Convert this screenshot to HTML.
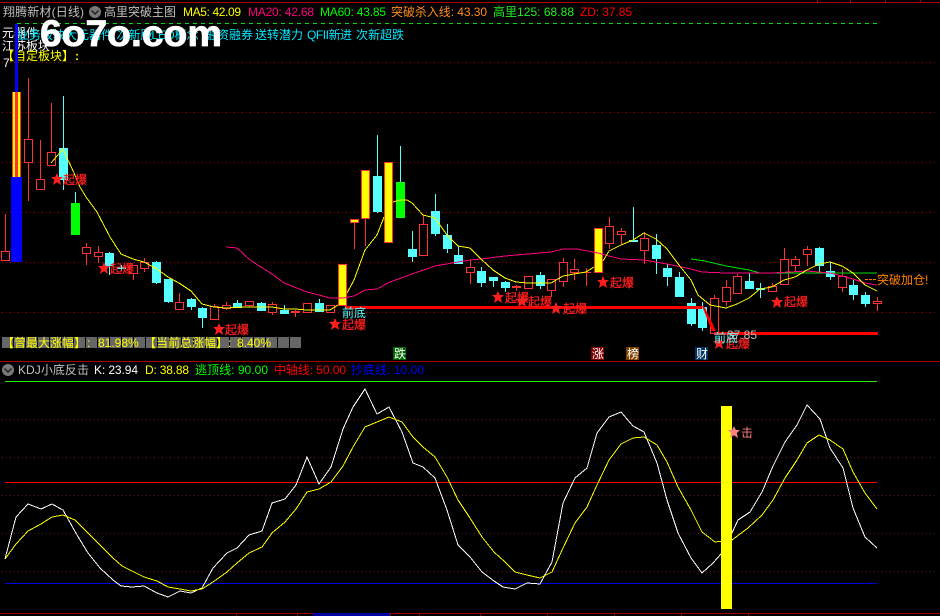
<!DOCTYPE html>
<html><head><meta charset="utf-8"><title>KDJ</title>
<style>
html,body{margin:0;padding:0;background:#000;width:940px;height:616px;overflow:hidden}
svg{display:block;position:absolute;left:0;top:0}
text{font-family:"Liberation Sans","WenQuanYi Zen Hei","Noto Sans CJK SC",sans-serif;font-size:12px}
.c{shape-rendering:crispEdges}
.r{fill:#000;stroke:#ff3232;stroke-width:1}
.b{fill:#55ffff}
.y{fill:#ffff00;stroke:#ff3232;stroke-width:1}
.l{fill:none;shape-rendering:crispEdges;stroke-width:1}
.q{fill:#ff1e1e;stroke:#ff1e1e;stroke-width:.25}
</style></head><body>
<svg width="940" height="616" viewBox="0 0 940 616" xmlns="http://www.w3.org/2000/svg">
<defs><polygon id="s" points="0,-6 1.8,-2 6,-2 2.8,1 4,6 0,3.2 -4,6 -2.8,1 -6,-2 -1.8,-2"/></defs>
<rect width="940" height="616" fill="#000"/>
<g class="c">
<path d="M0 2.5H940M817.5 0V2M850.5 0V2M885.5 0V2M920.5 0V2" stroke="#b00000" fill="none"/>
<path d="M0 361.5H940" stroke="#a00000"/>
<path d="M0 613.5H940M236.5 613V616M297.5 613V616M313.5 613V616M390.5 613V616M419.5 613V616M480.5 613V616M547.5 613V616M614.5 613V616M681.5 613V616M748.5 613V616" stroke="#a00000" fill="none"/>
<rect x="313" y="613" width="77" height="3" fill="#0000a0"/>
<path d="M2 62.5H938M2 112.5H938M2 162.5H938M2 212.5H938M2 262.5H938M2 312.5H938" stroke="#a00000" stroke-dasharray="1 3" fill="none"/>
<path d="M2 419.5H938M2 457.5H938M2 495.5H938M2 533.5H938M2 571.5H938" stroke="#601414" stroke-dasharray="1 3" fill="none"/>
<path d="M17 23.5H877" stroke="#00e000" stroke-dasharray="4 4" fill="none"/>
<path d="M5 381.5H877" stroke="#22ee00"/>
<path d="M5 482.5H877" stroke="#ff0000"/>
<path d="M5 583.5H877" stroke="#0000e0"/>
</g>

<!-- gray info bar -->
<g class="c" fill="#666">
<rect x="2" y="337" width="11" height="11"/><rect x="14" y="337" width="11" height="11"/><rect x="26" y="337" width="11" height="11"/><rect x="38" y="337" width="11" height="11"/><rect x="50" y="337" width="11" height="11"/><rect x="62" y="337" width="11" height="11"/><rect x="74" y="337" width="11" height="11"/><rect x="86" y="337" width="11" height="11"/><rect x="98" y="337" width="11" height="11"/><rect x="110" y="337" width="11" height="11"/><rect x="122" y="337" width="11" height="11"/><rect x="134" y="337" width="11" height="11"/><rect x="146" y="337" width="11" height="11"/><rect x="158" y="337" width="11" height="11"/><rect x="170" y="337" width="11" height="11"/><rect x="182" y="337" width="11" height="11"/><rect x="194" y="337" width="11" height="11"/><rect x="206" y="337" width="11" height="11"/><rect x="218" y="337" width="11" height="11"/><rect x="230" y="337" width="11" height="11"/><rect x="242" y="337" width="11" height="11"/><rect x="254" y="337" width="11" height="11"/><rect x="266" y="337" width="11" height="11"/><rect x="278" y="337" width="11" height="11"/><rect x="290" y="337" width="11" height="11"/>
</g>
<g fill="#ffff00">
<text x="2" y="347" textLength="84">【曾最大涨幅】</text><text x="87" y="347">:</text><text x="98" y="347">81.98%</text>
<text x="144" y="347" textLength="84">【当前总涨幅】</text><text x="228" y="347">:</text><text x="237" y="347">8.40%</text>
</g>

<!-- badges -->
<g class="c"><rect x="393" y="347" width="13" height="13" fill="#006400"/><rect x="591" y="347" width="13" height="13" fill="#800000"/><rect x="626" y="347" width="13" height="13" fill="#804000"/><rect x="695" y="347" width="13" height="13" fill="#003060"/></g>
<g fill="#fff"><text x="394" y="358">跌</text><text x="592" y="358">涨</text><text x="627" y="358">榜</text><text x="696" y="358">财</text></g>

<!-- wicks -->
<g class="c" fill="none">
<path stroke="#ff3232" d="M5.5 214V251M28.5 78V201M40.5 140V179M51.5 103V152M86.5 243V265M98.5 246V263M133.5 265V280M144.5 258V272M179.5 293V302M214.5 304V320M226.5 302V310M249.5 301V307M272.5 302V315M295.5 310V317M354.5 223V249M365.5 218V246M423.5 215V224M470.5 260V284M516.5 285V291M551.5 290V297M563.5 258V287M574.5 259V280M586.5 268V286M609.5 217V249M621.5 228V244M644.5 232V264M714.5 295V333M726.5 280V306M737.5 274V293M772.5 283V291M784.5 248V284M795.5 256V272M807.5 246V266M842.5 269V292M877.5 297V311"/>
<path stroke="#55ffff" d="M63.5 96V190M75.5 192V203M109.5 252V275M121.5 265V271M156.5 261V284M168.5 279V303M191.5 298V310M202.5 307V328M237.5 300V308M261.5 302V311M284.5 305V314M319.5 299V312M377.5 135V213M400.5 146V182M412.5 231V262M435.5 194V236M447.5 224V253M458.5 246V264M481.5 267V287M493.5 277V287M505.5 281V292M540.5 272V289M633.5 207V242M656.5 234V274M667.5 264V286M679.5 272V297M691.5 298V326M702.5 302V331M749.5 273V289M760.5 283V298M819.5 247V273M830.5 262V280M853.5 280V300M865.5 292V307"/>
</g>
<!-- bodies -->
<g class="c">
<rect class="r" x="1.5" y="251.5" width="8" height="9"/>
<rect x="15" y="24" width="3" height="68" fill="#0000ff"/>
<rect x="11" y="177" width="11" height="85" fill="#0000ff"/>
<rect x="12" y="92" width="9" height="85" fill="#ff3232"/><rect x="13" y="92" width="2" height="85" fill="#ffff00"/><rect x="18" y="92" width="2" height="85" fill="#ffff00"/>
<rect class="r" x="24.5" y="139.5" width="8" height="23"/>
<rect class="r" x="36.5" y="179.5" width="8" height="10"/>
<rect class="r" x="47.5" y="152.5" width="8" height="13"/>
<rect class="b" x="59" y="148" width="9" height="32"/>
<rect x="71" y="203" width="9" height="32" fill="#00ff00"/>
<rect class="r" x="82.5" y="247.5" width="8" height="6"/>
<rect class="r" x="94.5" y="252.5" width="8" height="4"/>
<rect class="b" x="105" y="253" width="9" height="13"/>
<rect class="b" x="117" y="267" width="9" height="2"/>
<rect class="r" x="129.5" y="265.5" width="8" height="8"/>
<rect class="r" x="140.5" y="262.5" width="8" height="6"/>
<rect class="b" x="152" y="262" width="9" height="21"/>
<rect class="b" x="164" y="279" width="9" height="23"/>
<rect class="r" x="175.5" y="302.5" width="8" height="7"/>
<rect class="b" x="187" y="299" width="9" height="8"/>
<rect class="b" x="198" y="308" width="9" height="10"/>
<rect class="r" x="210.5" y="306.5" width="8" height="13"/>
<rect class="r" x="222.5" y="305.5" width="8" height="3"/>
<rect class="b" x="233" y="303" width="9" height="5"/>
<rect class="r" x="245.5" y="301.5" width="8" height="4"/>
<rect class="b" x="257" y="303" width="9" height="8"/>
<rect class="r" x="268.5" y="304.5" width="8" height="8"/>
<rect class="b" x="280" y="310" width="9" height="4"/>
<rect x="291" y="311" width="9" height="2" fill="#ff3232"/>
<rect class="r" x="303.5" y="303.5" width="8" height="9"/>
<rect class="b" x="315" y="303" width="9" height="9"/>
<rect class="r" x="326.5" y="305.5" width="8" height="7"/>
<rect class="y" x="338.5" y="264.5" width="8" height="41"/>
<rect class="y" x="350.5" y="219.5" width="8" height="3"/>
<rect class="y" x="361.5" y="170.5" width="8" height="48"/>
<rect class="b" x="373" y="176" width="9" height="36"/>
<rect class="y" x="384.5" y="162.5" width="8" height="80"/>
<rect x="396" y="182" width="9" height="36" fill="#00ff00"/>
<rect class="b" x="408" y="249" width="9" height="8"/>
<rect class="r" x="419.5" y="224.5" width="8" height="31"/>
<rect class="b" x="431" y="211" width="9" height="23"/>
<rect class="b" x="443" y="235" width="9" height="14"/>
<rect class="b" x="454" y="255" width="9" height="9"/>
<rect class="r" x="466.5" y="267.5" width="8" height="5"/>
<rect class="b" x="477" y="271" width="9" height="12"/>
<rect class="b" x="489" y="277" width="9" height="4"/>
<rect class="b" x="501" y="282" width="9" height="6"/>
<rect x="512" y="286" width="9" height="2" fill="#ff3232"/>
<rect class="r" x="524.5" y="276.5" width="8" height="12"/>
<rect class="b" x="536" y="275" width="9" height="11"/>
<rect class="r" x="547.5" y="279.5" width="8" height="11"/>
<rect class="r" x="559.5" y="262.5" width="8" height="19"/>
<rect class="r" x="570.5" y="269.5" width="8" height="3"/>
<rect x="582" y="272" width="9" height="1" fill="#ff3232"/>
<rect class="y" x="594.5" y="228.5" width="8" height="44"/>
<rect class="r" x="605.5" y="226.5" width="8" height="17"/>
<rect class="r" x="617.5" y="231.5" width="8" height="3"/>
<rect class="b" x="629" y="240" width="9" height="2"/>
<rect class="r" x="640.5" y="238.5" width="8" height="12"/>
<rect class="b" x="652" y="245" width="9" height="14"/>
<rect class="b" x="663" y="268" width="9" height="9"/>
<rect class="b" x="675" y="277" width="9" height="20"/>
<rect class="b" x="687" y="303" width="9" height="21"/>
<rect class="b" x="698" y="307" width="9" height="21"/>
<rect class="r" x="710.5" y="298.5" width="8" height="35"/>
<rect class="r" x="722.5" y="287.5" width="8" height="14"/>
<rect class="r" x="733.5" y="276.5" width="8" height="17"/>
<rect class="b" x="745" y="281" width="9" height="8"/>
<rect class="b" x="756" y="288" width="9" height="2"/>
<rect class="r" x="768.5" y="286.5" width="8" height="5"/>
<rect class="r" x="780.5" y="259.5" width="8" height="25"/>
<rect class="r" x="791.5" y="259.5" width="8" height="6"/>
<rect class="r" x="803.5" y="249.5" width="8" height="5"/>
<rect class="b" x="815" y="248" width="9" height="18"/>
<rect class="b" x="826" y="271" width="9" height="6"/>
<rect class="r" x="838.5" y="276.5" width="8" height="11"/>
<rect class="b" x="849" y="285" width="9" height="10"/>
<rect class="b" x="861" y="295" width="9" height="9"/>
<rect class="r" x="873.5" y="301.5" width="8" height="2"/>
</g>

<!-- MA lines -->
<polyline class="l" stroke="#00e000" points="691,259 705,261 726,266 749,270 760,273 784,273 877,273"/>
<polyline class="l" stroke="#ff0080" points="226,247 237,248 250,260 272,274 284,283 307,292 319,295 330,298 343,298 354,296 365,290 377,289 390,282 412,274 435,266 458,262 470,260 481,259 505,256 528,254 551,252 563,249 577,249 598,253 609,256 621,259 644,260 667,264 691,269 702,272 726,273 749,273 772,273 807,271 830,273 853,279 865,283 877,285"/>
<polyline class="l" stroke="#ffff00" points="51,163 63,149 74,173 80,187 86,197 97,212 110,237 121,254 133,259 144,262 157,269 168,277 179,283 191,291 202,304 214,307 226,308 245,307 261,307 272,307 284,309 295,309 307,310 330,310 338,305"/>
<polyline class="l" stroke="#ffff00" points="347,293 354,280 365,250 377,235 384,217"/>
<polyline class="l" stroke="#ffff00" points="393,202 400,200 407,200 412,203 423,215 435,218 447,235 458,246 470,248 481,259 493,270 505,278 516,282 528,283 540,283 551,283 563,276 574,274 586,272 594,267"/>
<polyline class="l" stroke="#ffff00" points="603,261 609,251 621,245 633,240 644,233 656,239 667,249 679,265 691,280 698,295 710,305 726,308 737,304 749,298 760,289 772,287 784,280 795,277 807,270 819,264 830,262 842,266 853,273 865,285 877,291"/>

<!-- thick red -->
<g class="c" fill="#ff0000">
<rect x="345" y="306" width="357" height="3"/>
<polygon points="702,306 704,306 716,331 712,331"/>
<rect x="714" y="332" width="164" height="3"/>
</g>

<!-- labels -->
<g fill="#ff1e1e">
<use href="#s" x="57" y="179"/><use href="#s" x="104" y="268"/><use href="#s" x="219" y="329"/><use href="#s" x="335" y="324"/><use href="#s" x="498" y="297"/><use href="#s" x="522" y="301"/><use href="#s" x="556" y="308"/><use href="#s" x="603" y="282"/><use href="#s" x="777" y="302"/><use href="#s" x="719" y="343"/>
</g>
<g class="q">
<text x="63" y="184">起爆</text><text x="110" y="273">起爆</text><text x="225" y="334">起爆</text><text x="342" y="329">起爆</text><text x="505" y="302">起爆</text><text x="528" y="306">起爆</text><text x="563" y="313">起爆</text><text x="610" y="287">起爆</text><text x="784" y="306">起爆</text><text x="726" y="348">起爆</text>
</g>
<g fill="#55ffff"><text x="342" y="317">前底</text><text x="714" y="342">前底</text></g>
<text x="727" y="339" fill="#c0c0c0">37.85</text>
<path class="c" d="M865 279.5H876" stroke="#ff8000" stroke-dasharray="3 1" fill="none"/>
<text x="877" y="284" fill="#ff8000">突破加仓!</text>

<!-- header top -->
<text x="3" y="16" fill="#c0c0c0" textLength="81">翔腾新材(日线)</text>
<circle cx="95" cy="12" r="6" fill="#787878"/><path d="M91.5 10.5L95 14L98.5 10.5" stroke="#222" stroke-width="1.5" fill="none"/>
<text x="104" y="16" fill="#c0c0c0">高里突破主图</text>
<text x="183" y="16" fill="#ffff00" textLength="58">MA5: 42.09</text>
<text x="248" y="16" fill="#ff0080" textLength="66">MA20: 42.68</text>
<text x="320" y="16" fill="#00ff00" textLength="66">MA60: 43.85</text>
<text x="391" y="16" fill="#ff8c1e" textLength="96">突破杀入线: 43.30</text>
<text x="493" y="16" fill="#22ee22" textLength="81">高里125: 68.88</text>
<text x="580" y="16" fill="#ff0000" textLength="52">ZD: 37.85</text>

<text x="2" y="37" fill="#fff">元器件</text>
<text x="2" y="50" fill="#fff">江苏板块</text>
<text x="3" y="67" fill="#fff">7</text>
<text x="17" y="39" fill="#00e8ff">业务板块大元器件 次新股</text>
<text x="142" y="39" fill="#00e8ff">OLED概念</text>
<text x="205" y="39" fill="#00e8ff">融资融券</text>
<text x="255" y="39" fill="#00e8ff">送转潜力</text>
<text x="307" y="39" fill="#00e8ff" textLength="45">QFII新进</text>
<text x="356" y="39" fill="#00e8ff">次新超跌</text>
<text x="2" y="60" fill="#ffff00">【自定板块】</text>
<text x="75" y="60" fill="#ffff00" style="font-weight:bold">:</text>
<rect x="15" y="24" width="3" height="38" fill="#0000ff" class="c"/>

<!-- lower header -->
<circle cx="8" cy="370" r="6" fill="#787878"/><path d="M4.5 368.5L8 372L11.5 368.5" stroke="#222" stroke-width="1.5" fill="none"/>
<text x="18" y="374" fill="#c0c0c0" textLength="71">KDJ小底反击</text>
<text x="94" y="374" fill="#fff" textLength="44">K: 23.94</text>
<text x="145" y="374" fill="#ffff00" textLength="44">D: 38.88</text>
<text x="195" y="374" fill="#00ff00" textLength="73">逃顶线: 90.00</text>
<text x="274" y="374" fill="#ff0000" textLength="72">中轴线: 50.00</text>
<text x="351" y="374" fill="#0000ff" textLength="73">抄底线: 10.00</text>

<!-- KDJ -->
<polyline class="l" stroke="#fff" points="5,559 16,517 28,504 41,509 52,504 63,510 77,535 88,553 100,568 113,580 121,586 132,587 144,586 157,593 168,597 180,591 191,593 202,588 213,568 227,553 237,548 249,535 262,531 272,503 285,499 296,485 307,457 319,484 331,467 343,429 353,407 365,389 377,414 389,407 402,432 413,463 423,467 435,478 447,510 458,545 470,557 482,572 494,581 503,587 515,589 527,583 540,584 552,562 563,503 575,478 587,468 597,433 609,417 621,412 633,426 644,432 657,463 667,500 678,533 691,558 702,573 713,563 721,554 732,533 738,520 750,512 762,492 773,466 785,442 797,425 807,405 820,419 830,448 843,468 853,508 865,537 877,548"/>
<polyline class="l" stroke="#ffff00" points="5,559 16,544 28,531 41,524 52,517 63,515 75,520 88,533 100,545 113,558 122,566 132,571 144,577 157,581 168,587 180,589 191,591 202,589 213,582 227,572 237,563 249,553 262,547 272,533 285,522 296,509 307,492 319,489 331,482 343,466 353,447 365,427 377,422 389,417 402,422 413,437 423,447 435,457 447,477 458,500 470,518 482,537 494,552 505,562 515,572 527,575 540,578 552,572 563,548 575,523 587,507 597,485 609,460 621,444 633,438 644,437 657,445 667,462 678,487 691,510 702,532 715,542 732,540 748,528 762,515 773,500 785,478 797,460 807,443 819,435 830,440 843,449 853,472 865,493 877,509"/>
<rect class="c" x="721" y="406" width="11" height="203" fill="#ffff00"/>
<use href="#s" x="734" y="432" fill="#ff8080"/>
<text x="741" y="437" fill="#ff8080">击</text>

<!-- watermark -->
<text x="40" y="46" fill="#fff" stroke="#fff" stroke-width="0.8" textLength="182" lengthAdjust="spacingAndGlyphs" style="font-size:37px;font-weight:bold">6o7o.com</text>
</svg>
</body></html>
